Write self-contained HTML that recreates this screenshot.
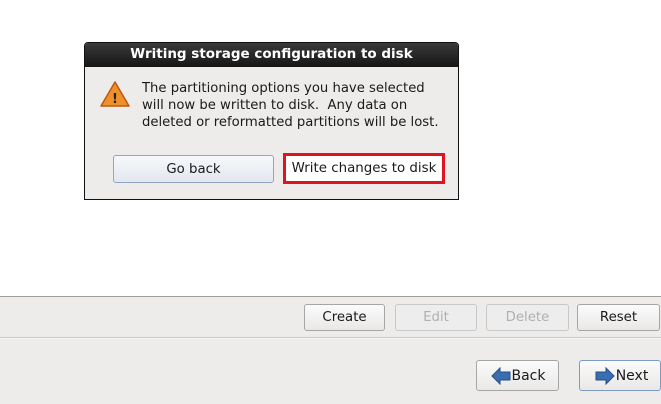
<!DOCTYPE html>
<html><head><style>
body{margin:0;width:661px;height:404px;background:#edeceb;position:relative;overflow:hidden;font-family:"DejaVu Sans","Liberation Sans",sans-serif;font-size:13px;color:#1a1a1a}
.abs{position:absolute;box-sizing:border-box}
.btn{position:absolute;box-sizing:border-box;border:1px solid #a6a6a6;border-radius:3px;background:linear-gradient(#fbfbfb,#e9e8e7);text-align:center;font-size:13.3px}
.dis{color:#b0b0b0;border-color:#c8c8c8;background:#eeeded}
</style></head><body>
<div class="abs" style="left:0;top:0;width:661px;height:297px;background:#fff;border-bottom:1px solid #9f9e9c"></div>
<div class="abs" style="left:0;top:337px;width:661px;height:2px;background:#c9c8c6;border-bottom:1px solid #f8f8f8"></div>

<div class="btn" style="left:304px;top:304px;width:81px;height:27px;line-height:26px">Create</div>
<div class="btn dis" style="left:395px;top:304px;width:82px;height:27px;line-height:26px">Edit</div>
<div class="btn dis" style="left:486px;top:304px;width:83px;height:27px;line-height:26px">Delete</div>
<div class="btn" style="left:577px;top:304px;width:83px;height:27px;line-height:26px">Reset</div>

<div class="btn" style="left:476px;top:360px;width:83px;height:31px;line-height:30px;padding-left:22px;font-size:14px">Back
<svg style="position:absolute;left:14px;top:6px" width="20" height="18" viewBox="0 0 20 18"><path d="M1 9 L9 1 L9 5 L19 5 L19 13 L9 13 L9 17 Z" fill="#3b6eb0" stroke="#244e86"/></svg></div>
<div class="btn" style="left:579px;top:360px;width:82px;height:31px;line-height:30px;padding-left:24px;border-color:#7d9cc4;font-size:14px">Next
<svg style="position:absolute;left:15px;top:6px" width="20" height="18" viewBox="0 0 20 18"><path d="M19 9 L11 1 L11 5 L1 5 L1 13 L11 13 L11 17 Z" fill="#3b6eb0" stroke="#244e86"/></svg></div>

<div class="abs" style="left:84px;top:42px;width:375px;height:158px;border:1px solid #111;background:#edeceb;border-radius:4px 4px 0 0">
 <div class="abs" style="left:0;top:0;width:373px;height:24px;background:linear-gradient(#3a3a3a,#161616);color:#fff;font-weight:bold;font-size:13.5px;text-align:center;line-height:23px;border-radius:3px 3px 0 0">Writing storage configuration to disk</div>
 <svg style="position:absolute;left:14px;top:37px" width="32" height="28" viewBox="0 0 32 28"><path d="M16 2 L30 26 L2 26 Z" fill="#f0902a" stroke="#b85a10" stroke-width="1.5" stroke-linejoin="round"/><text x="16" y="23" font-size="13" font-weight="bold" text-anchor="middle" fill="#222" font-family="DejaVu Sans">!</text></svg>
 <div class="abs" style="left:57px;top:37px;width:320px;line-height:17px;font-size:13.2px">The partitioning options you have selected<br>will now be written to disk.&nbsp; Any data on<br>deleted or reformatted partitions will be lost.</div>
 <div class="btn" style="left:28px;top:112px;width:161px;height:28px;line-height:27px;border-color:#8fa6c4;background:linear-gradient(#f6f8fb,#e3e7ee)">Go back</div>
 <div class="abs" style="left:198px;top:110px;width:162px;height:31px;border:3px solid #e0141e;background:#fff;text-align:center;line-height:26px;font-size:13.4px">Write changes to disk</div>
</div>
</body></html>
